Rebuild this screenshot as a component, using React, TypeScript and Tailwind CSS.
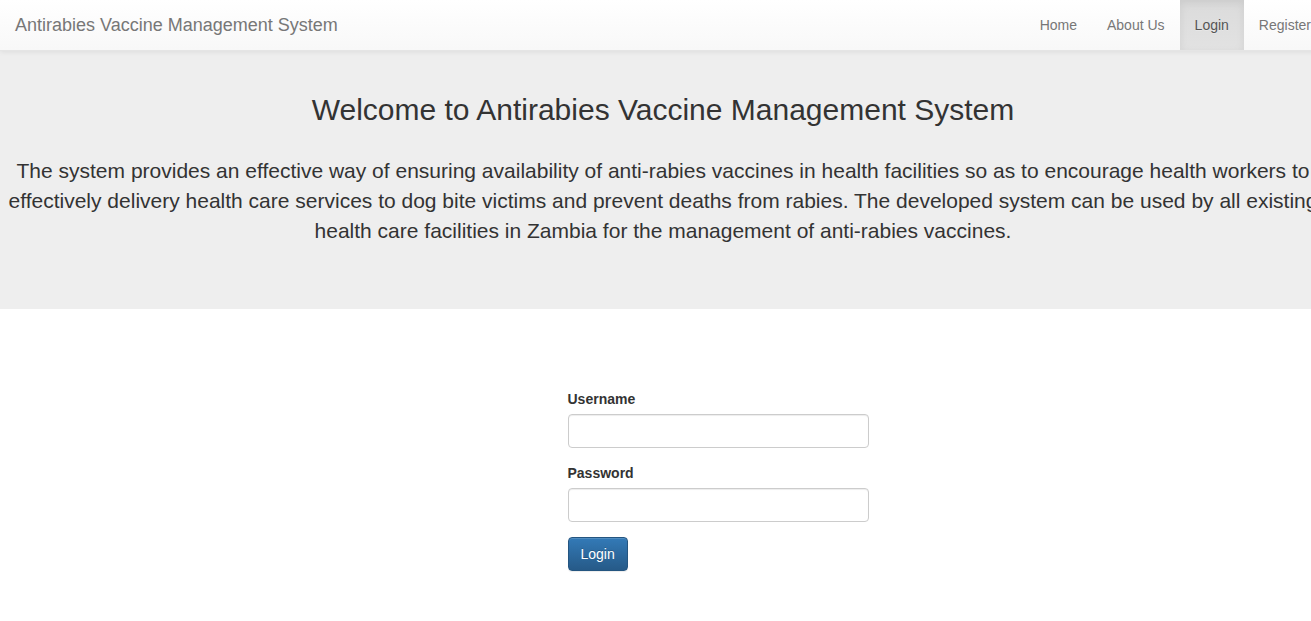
import React from "react";

const links = [
  { label: "Home", href: "#home", active: false },
  { label: "About Us", href: "#about", active: false },
  { label: "Login", href: "#login", active: true },
  { label: "Register", href: "#register", active: false },
];

function Navbar() {
  return (
    <nav className="relative flex items-stretch justify-between border-b border-[#e5e5e5] bg-linear-to-b from-white to-[#f8f8f8] shadow-[0_1px_5px_rgba(0,0,0,0.075)] [text-shadow:0_1px_0_rgba(255,255,255,0.25)]">
      <a href="#home" className="p-[15px] text-lg leading-5 text-[#777]">
        Antirabies Vaccine Management System
      </a>
      <ul className="flex">
        {links.map((link) => (
          <li key={link.label}>
            <a
              href={link.href}
              aria-current={link.active ? "page" : undefined}
              className={
                link.active
                  ? "block bg-linear-to-b from-[#dbdbdb] to-[#e2e2e2] p-[15px] leading-5 text-[#555] shadow-[inset_0_3px_9px_rgba(0,0,0,0.075)]"
                  : "block p-[15px] leading-5 text-[#777]"
              }
            >
              {link.label}
            </a>
          </li>
        ))}
      </ul>
    </nav>
  );
}

function Field({ id, label, type }: { id: string; label: string; type: string }) {
  return (
    <div className="mb-[15px]">
      <label htmlFor={id} className="mb-[5px] block font-bold leading-5">
        {label}
      </label>
      <input
        id={id}
        name={id}
        type={type}
        className="block h-[34px] w-full rounded border border-[#ccc] bg-white px-3 py-1.5 text-sm text-[#555] shadow-[inset_0_1px_1px_rgba(0,0,0,0.075)] outline-none focus:border-[#66afe9]"
      />
    </div>
  );
}

export default function App() {
  return (
    <div className="min-h-screen overflow-x-hidden bg-white font-['Liberation_Sans',Arial,sans-serif] text-sm text-[#333]">
      <div className="-mr-[15px]">
        <div className="bg-[#eee]">
          <Navbar />
          <header className="pt-[42px] pb-[63px] text-center">
            <h1 className="mb-[30px] text-[30px] leading-[33px] font-medium">
              Welcome to Antirabies Vaccine Management System
            </h1>
            <p className="text-[21px] leading-[30px]">
              The system provides an effective way of ensuring availability of anti-rabies vaccines in
              health facilities so as to encourage health workers to effectively delivery health care
              services to dog bite victims and prevent deaths from rabies. The developed system can be
              used by all existing health care facilities in Zambia for the management of anti-rabies
              vaccines.
            </p>
          </header>
        </div>
        <main className="grid grid-cols-12 py-20">
          <form
            className="col-span-3 col-start-6 px-[15px]"
            onSubmit={(event) => event.preventDefault()}
          >
            <Field id="username" label="Username" type="text" />
            <Field id="password" label="Password" type="password" />
            <button
              type="submit"
              className="cursor-pointer rounded border border-[#245580] bg-linear-to-b from-[#337ab7] to-[#265a88] px-3 py-1.5 leading-5 text-white shadow-[inset_0_1px_0_rgba(255,255,255,0.15),0_1px_1px_rgba(0,0,0,0.075)] [text-shadow:0_-1px_0_rgba(0,0,0,0.2)]"
            >
              Login
            </button>
          </form>
        </main>
      </div>
    </div>
  );
}
